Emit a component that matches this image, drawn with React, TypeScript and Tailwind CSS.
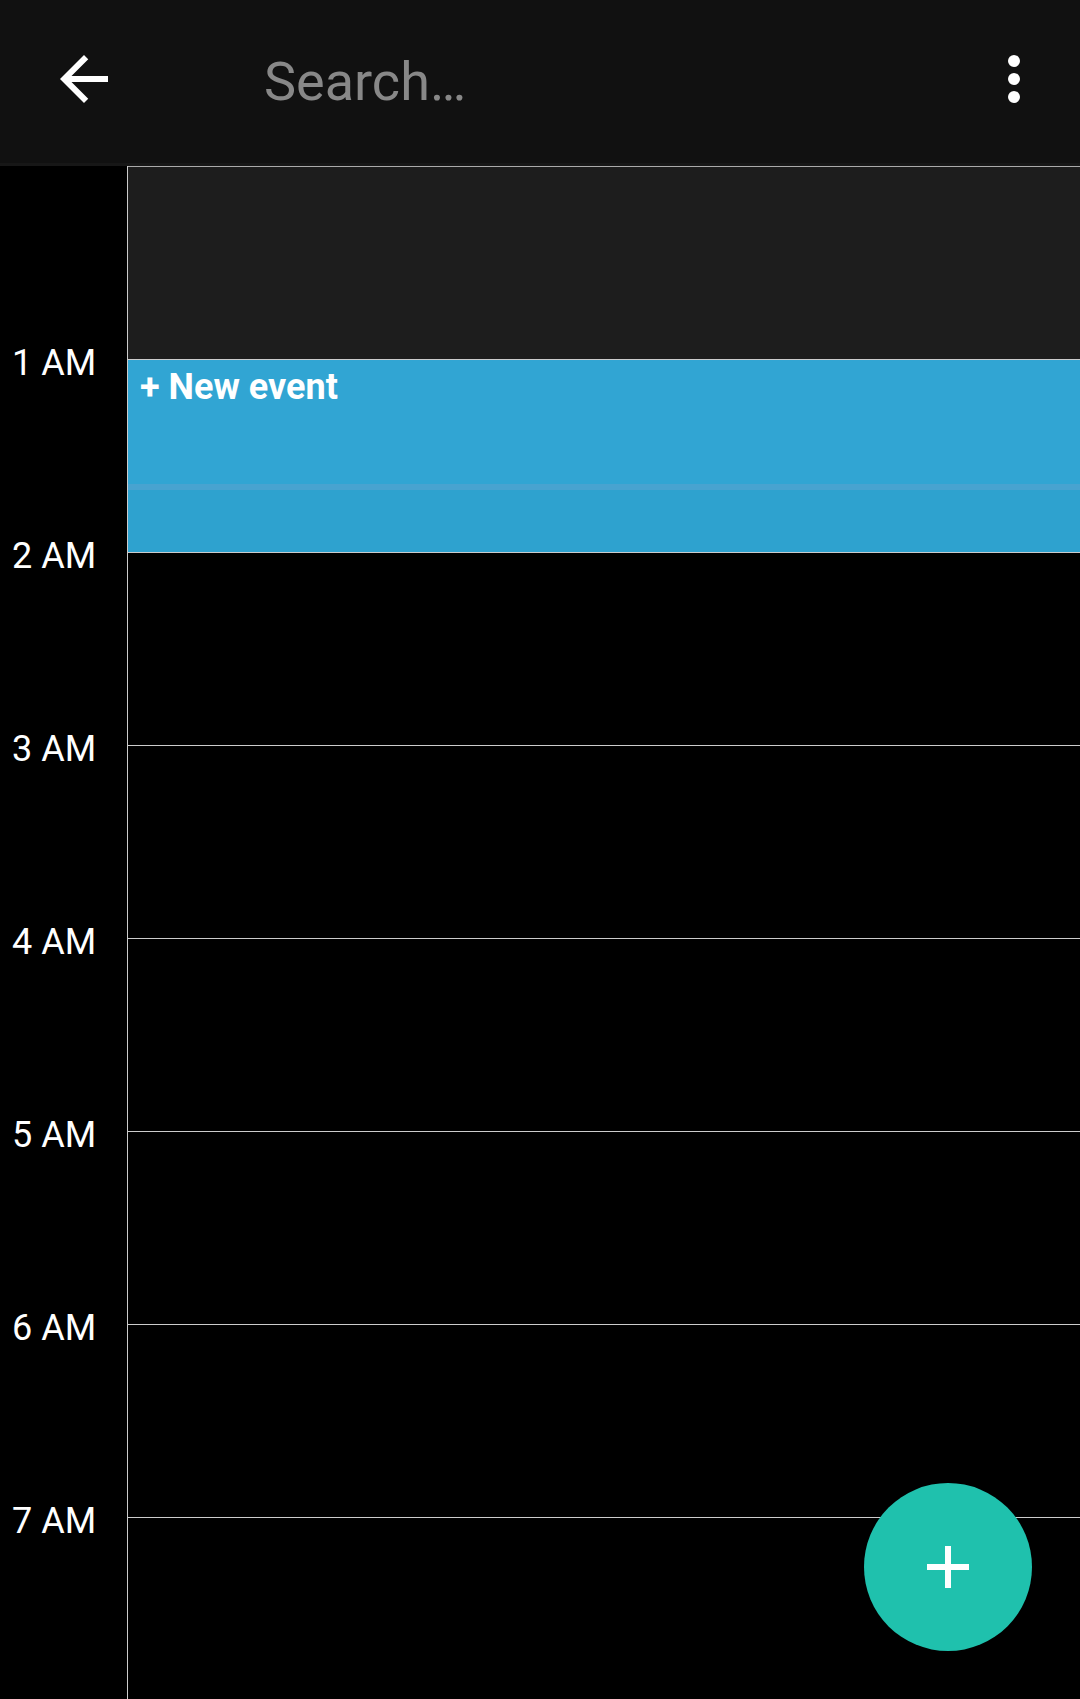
const hours = ["1 AM", "2 AM", "3 AM", "4 AM", "5 AM", "6 AM", "7 AM"];

function BackIcon() {
  return (
    <svg viewBox="0 0 24 24" className="size-[72px]" fill="currentColor" aria-hidden="true">
      <path d="M20 11H7.83l5.59-5.59L12 4l-8 8 8 8 1.41-1.41L7.83 13H20v-2z" />
    </svg>
  );
}

function MoreIcon() {
  return (
    <svg viewBox="0 0 24 24" className="size-[72px]" fill="currentColor" aria-hidden="true">
      <circle cx="12" cy="6" r="2" />
      <circle cx="12" cy="12" r="2" />
      <circle cx="12" cy="18" r="2" />
    </svg>
  );
}

function AddIcon() {
  return (
    <svg viewBox="0 0 24 24" className="size-[72px]" fill="currentColor" aria-hidden="true">
      <path d="M19 13h-6v6h-2v-6H5v-2h6V5h2v6h6v2z" />
    </svg>
  );
}

function TopBar() {
  return (
    <header className="flex h-[166px] shrink-0 items-start border-b-[3px] border-[#171717] bg-[#111111] pt-[43px] pr-[30px] pl-12">
      <button type="button" aria-label="Back" className="shrink-0">
        <BackIcon />
      </button>
      <input
        type="text"
        aria-label="Search"
        placeholder="Search…"
        className="ml-36 h-[76px] min-w-0 flex-1 bg-transparent text-[54px] text-white outline-none placeholder:text-[#888888]"
      />
      <button type="button" aria-label="More options" className="shrink-0">
        <MoreIcon />
      </button>
    </header>
  );
}

function NewEvent() {
  return (
    <button type="button" className="flex h-full w-full flex-col bg-[#31a5d3] text-left">
      <span className="h-[124px] px-3 pt-1.5 text-4xl leading-[42px] font-bold">+ New event</span>
      <span className="h-1.5 w-full bg-[#48a3d0]" />
      <span className="w-full flex-1 bg-[#2ea2cf]" />
    </button>
  );
}

export default function App() {
  return (
    <div className="relative flex h-screen flex-col overflow-hidden bg-black font-[Roboto,sans-serif] text-white">
      <TopBar />
      <main className="flex min-h-0 flex-1 overflow-hidden">
        <ol className="w-[127px] shrink-0 pt-44 pl-3 text-4xl leading-[42px]">
          {hours.map((hour) => (
            <li key={hour} className="h-[193px]">
              {hour}
            </li>
          ))}
        </ol>
        <div className="flex-1 border-l border-[#cccccc]">
          <div className="h-[193px] border-t border-[#aaaaaa] bg-[#1d1d1d]" />
          <div className="h-[193px] border-t border-[#cccccc]">
            <NewEvent />
          </div>
          {hours.slice(1).map((hour) => (
            <div key={hour} className="h-[193px] border-t border-[#cccccc]" />
          ))}
        </div>
      </main>
      <button
        type="button"
        aria-label="Add event"
        className="absolute right-12 bottom-12 flex size-[168px] items-center justify-center rounded-full bg-[#1fc1ad]"
      >
        <AddIcon />
      </button>
    </div>
  );
}
